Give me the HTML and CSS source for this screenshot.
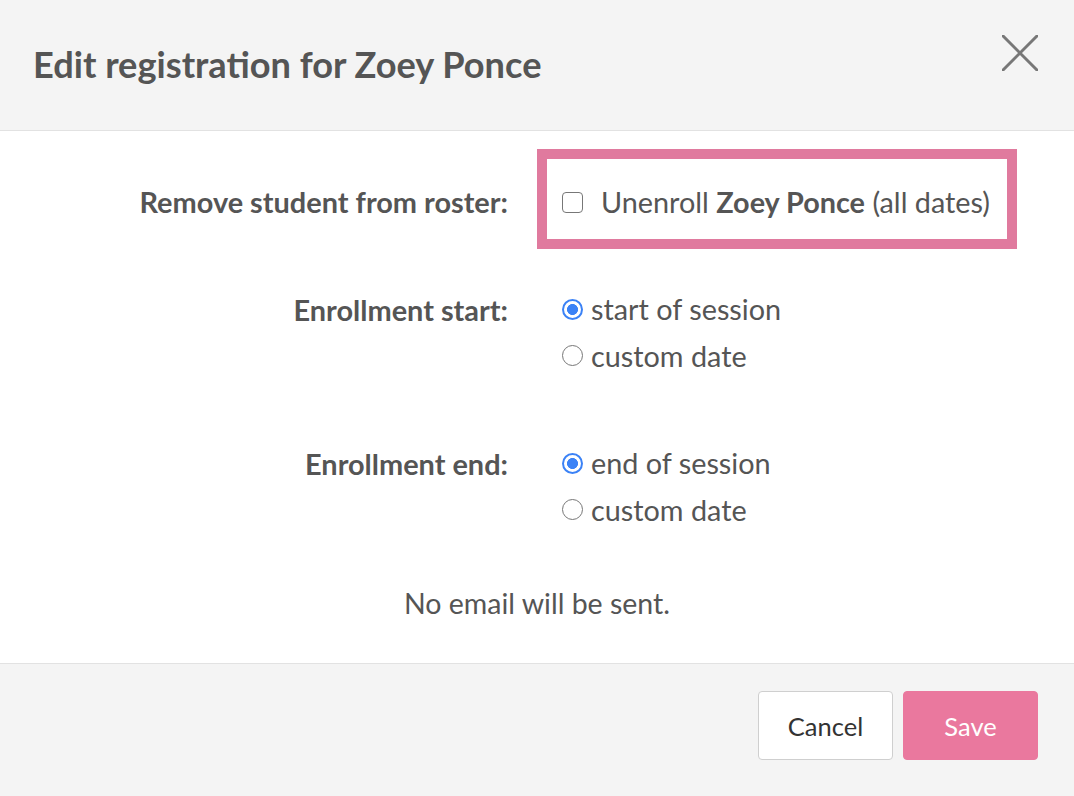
FILE: index.html
```html
<!DOCTYPE html>
<html lang="en">
<head>
<meta charset="utf-8">
<title>Edit registration</title>
<link rel="stylesheet" href="styles.css">
</head>
<body>
<div class="modal">
  <header class="modal-header">
    <h1 class="modal-title">Edit registration for Zoey Ponce</h1>
    <button class="close" aria-label="Close">
      <svg width="36" height="36" viewBox="0 0 36 36"><path d="M1 1 L35 35 M35 1 L1 35" stroke="#777" stroke-width="3" stroke-linecap="round" fill="none"/></svg>
    </button>
  </header>
  <main class="modal-body">
    <div class="form">
      <div class="label row-remove">Remove student from roster:</div>
      <div class="highlight">
        <label class="check-line"><input type="checkbox" class="check"> <span>Unenroll <b>Zoey Ponce</b> (all dates)</span></label>
      </div>

      <div class="label row-start">Enrollment start:</div>
      <div class="options row-start">
        <label class="option"><input type="radio" name="start" class="radio" checked><span>start of session</span></label>
        <label class="option"><input type="radio" name="start" class="radio"><span>custom date</span></label>
      </div>

      <div class="label row-end">Enrollment end:</div>
      <div class="options row-end">
        <label class="option"><input type="radio" name="end" class="radio" checked><span>end of session</span></label>
        <label class="option"><input type="radio" name="end" class="radio"><span>custom date</span></label>
      </div>
    </div>
    <p class="note">No email will be sent.</p>
  </main>
  <footer class="modal-footer">
    <button class="btn btn-cancel">Cancel</button>
    <button class="btn btn-save">Save</button>
  </footer>
</div>
</body>
</html>
```

FILE: styles.css
```css
* { box-sizing: border-box; }
html, body { margin: 0; padding: 0; }
body {
  font-family: Lato, "Open Sans", "Liberation Sans", sans-serif;
  color: #555;
  background: #fff;
  width: 1074px;
  height: 796px;
  overflow: hidden;
}
.modal { display: flex; flex-direction: column; height: 796px; }
.modal-header {
  height: 131px;
  background: #f4f4f4;
  border-bottom: 1px solid #e2e2e2;
  display: flex;
  align-items: center;
  justify-content: space-between;
  padding: 0 36px 0 33px;
}
.modal-title {
  margin: 0 0 2px;
  font-size: 36.2px;
  font-weight: 700;
  color: #555;
  line-height: 44px;
}
.close {
  border: 0;
  background: transparent;
  padding: 0;
  width: 36px;
  height: 36px;
  margin-bottom: 24px;
  cursor: pointer;
}
.close svg { display: block; }
.modal-body {
  flex: 1;
  padding-top: 18px;
  background: #fff;
}
.form {
  display: grid;
  grid-template-columns: 508px 480px;
  column-gap: 29px;
  align-items: center;
}
.label {
  text-align: right;
  font-weight: 700;
  font-size: 28.9px;
  white-space: nowrap;
}
.label.row-remove { padding-top: 5px; }
.label.row-start, .label.row-end { align-self: start; line-height: 47px; }
.highlight {
  border: 10px solid #e07a9e;
  height: 100px;
  padding: 0 15px;
  display: flex;
  align-items: center;
}
.check-line {
  display: flex;
  align-items: center;
  font-size: 28.8px;
  padding-top: 6px;
  white-space: nowrap;
}
.check-line span { margin-left: 18px; }
.check-line b { font-weight: 700; }
.check {
  appearance: none;
  -webkit-appearance: none;
  width: 21px;
  height: 21px;
  margin: 0;
  border: 1.5px solid #777;
  border-radius: 4px;
  background: #fff;
  flex: none;
}
.options {
  padding-left: 25px;
  display: flex;
  flex-direction: column;
}
.options.row-start, .label.row-start { margin-top: 37px; }
.options.row-end, .label.row-end { margin-top: 61px; }
.option {
  display: flex;
  align-items: center;
  height: 46.5px;
  font-size: 28.8px;
}
.option span { margin-left: 8px; }
.radio {
  appearance: none;
  -webkit-appearance: none;
  width: 21px;
  height: 21px;
  margin: 0;
  border: 1.5px solid #777;
  border-radius: 50%;
  background: #fff;
  flex: none;
}
.radio:checked {
  border: 2.5px solid #3b82f6;
  background: radial-gradient(circle, #3b82f6 0 5.2px, #fff 5.8px);
}
.note {
  text-align: center;
  font-size: 28.5px;
  margin: 50px 0 0;
  line-height: 40px;
}
.modal-footer {
  height: 133px;
  background: #f4f4f4;
  border-top: 1px solid #e2e2e2;
  display: flex;
  justify-content: flex-end;
  align-items: flex-start;
  gap: 10px;
  padding: 27px 36px 0 0;
}
.btn {
  font-family: Lato, "Open Sans", "Liberation Sans", sans-serif;
  font-size: 25.5px;
  width: 135px;
  height: 69px;
  border-radius: 4px;
  cursor: pointer;
}
.btn-cancel {
  background: #fff;
  border: 1px solid #cfcfcf;
  color: #333;
}
.btn-save {
  background: #ea789e;
  border: 1px solid #ea789e;
  color: #fff;
}
```
